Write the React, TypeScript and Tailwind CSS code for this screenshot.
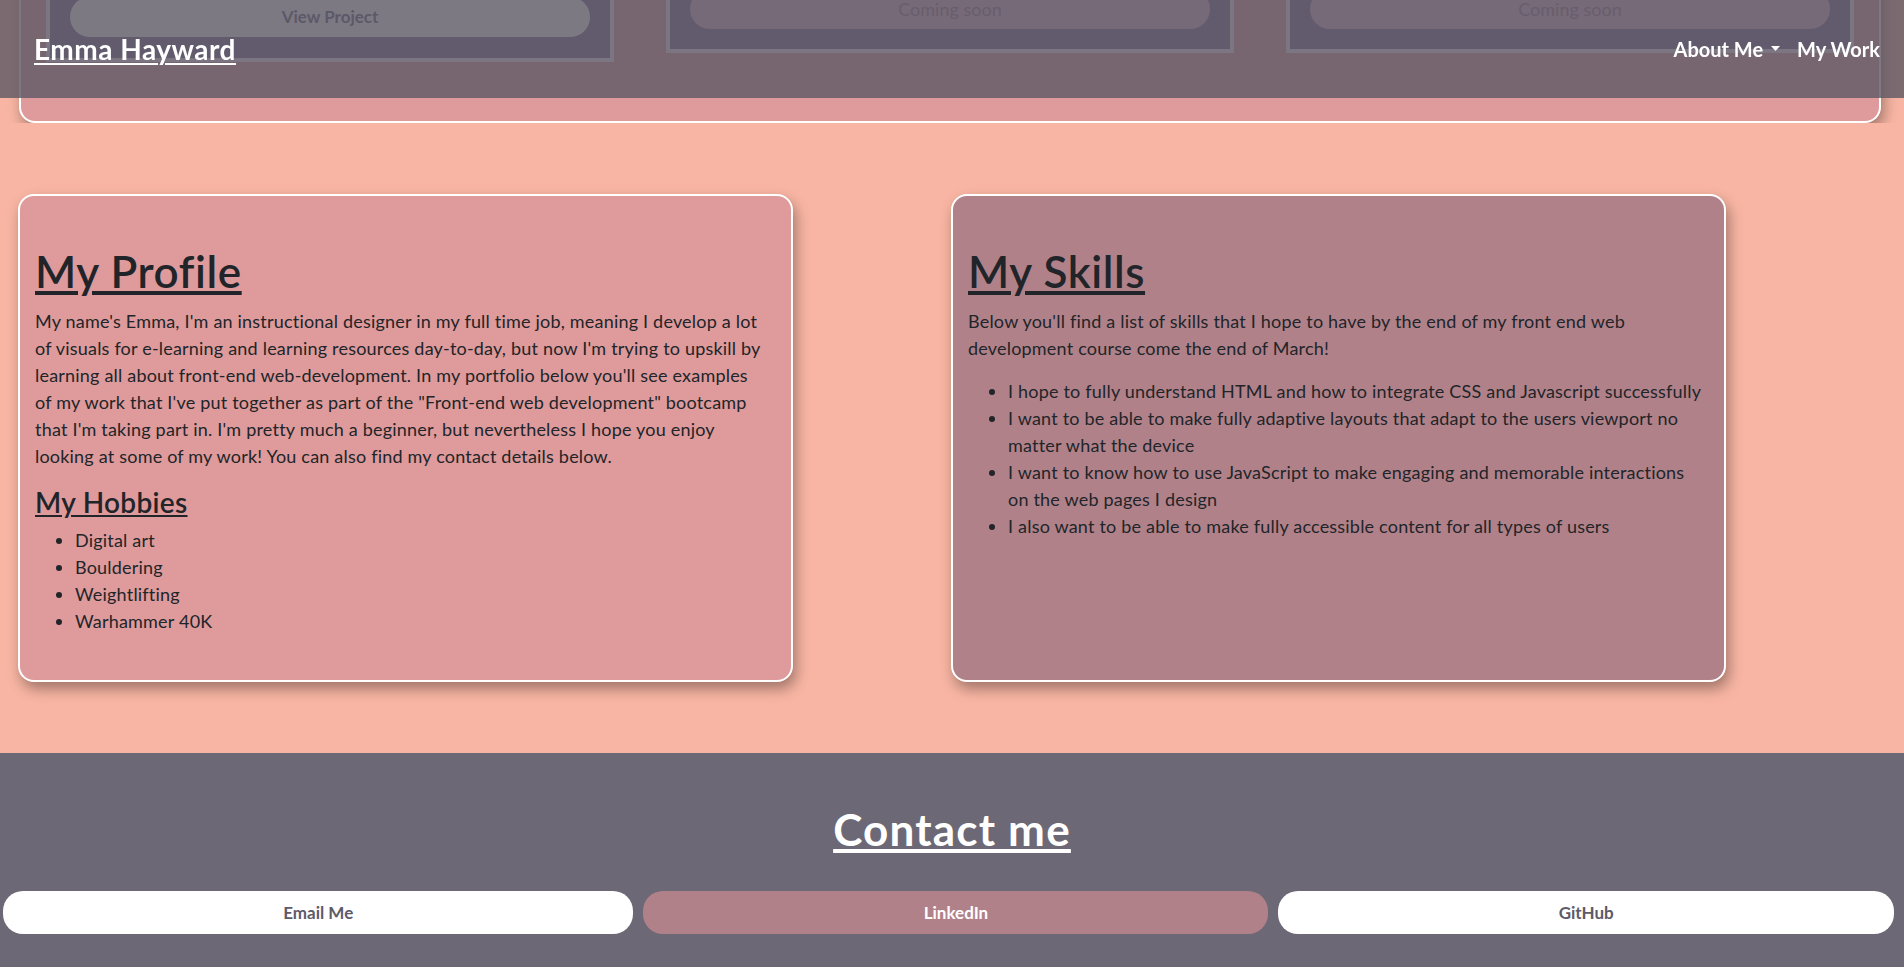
import { ReactNode } from "react";

const hobbies = ["Digital art", "Bouldering", "Weightlifting", "Warhammer 40K"]

const skills = [
    "I hope to fully understand HTML and how to integrate CSS and Javascript successfully",
    "I want to be able to make fully adaptive layouts that adapt to the users viewport no matter what the device",
    "I want to know how to use JavaScript to make engaging and memorable interactions on the web pages I design",
    "I also want to be able to make fully accessible content for all types of users",
]

function Caret() {
    return (
        <svg width="9" height="5" viewBox="0 0 9 5" className="mb-[2px]">
            <polygon points="0,0 9,0 4.5,5" fill="white" />
        </svg>
    )
}

function Navbar() {
    return (
        <nav className="fixed inset-x-0 top-0 z-10 flex h-[98px] items-center justify-between bg-[rgba(92,88,100,0.8)] pl-[34px] pr-[24px]">
            <a href="#" className="text-[28px] font-bold tracking-[0.5px] text-white underline decoration-2 underline-offset-[3px]">Emma Hayward</a>
            <div className="flex items-center text-[20px] font-bold text-white">
                <a href="#" className="flex items-center gap-[8px]">About Me <Caret /></a>
                <a href="#" className="ml-[17px]">My Work</a>
            </div>
        </nav>
    )
}

function ProjectCard({ label, soon, extra }: { label: string, soon?: boolean, extra?: boolean }) {
    return (
        <div className={`border-4 border-[#f5eefa] bg-[#7a6791] px-5 ${extra ? 'pt-[28px] pb-[21px]' : 'pt-5 pb-5'}`}>
            <div className="h-[180px]" />
            {soon ? (
                <div className="flex h-[40px] items-center justify-center rounded-full bg-[#ddb2c6] text-[18px] text-[#93768f]">{label}</div>
            ) : (
                <div className="flex h-[40px] items-center justify-center rounded-full bg-white text-[17px] font-bold text-[#625a78]">{label}</div>
            )}
        </div>
    )
}

function Card({ bg, children }: { bg: string, children: ReactNode }) {
    return (
        <div className={`h-[488px] w-[775px] rounded-[16px] border-2 border-white px-[15px] pt-[49px] shadow-[3px_7px_14px_rgba(0,0,0,0.35)] ${bg}`}>
            {children}
        </div>
    )
}

export default function App(): ReactNode {
    return (
        <div className="relative h-[967px] overflow-hidden bg-[#f8b5a3] font-['Lato',sans-serif] text-[#212529]">
            <Navbar />

            {/* projects section, scrolled past */}
            <div className="flex h-[123px] flex-col justify-end overflow-hidden pl-[19px] pr-[23px]">
                <div className="rounded-b-[16px] border-2 border-t-0 border-white bg-[#df9a9b] px-[25px] pb-[59px] shadow-[3px_7px_14px_rgba(0,0,0,0.35)]">
                    <div className="grid grid-cols-3 items-start gap-[52px]">
                        <ProjectCard label="View Project" extra />
                        <ProjectCard label="Coming soon" soon />
                        <ProjectCard label="Coming soon" soon />
                    </div>
                </div>
            </div>

            <section className="flex gap-[158px] pl-[18px] pt-[71px] pb-[71px] text-[18px] leading-[27px] tracking-[0.2px]">
                <Card bg="bg-[#df9a9b]">
                    <h1 className="mb-[10px] text-[44px] font-semibold leading-[1.2] tracking-[0.6px] underline">My Profile</h1>
                    <p className="mb-[16px] max-w-[730px]">
                        My name's Emma, I'm an instructional designer in my full time job, meaning I develop a lot of visuals for e-learning and learning resources day-to-day, but now I'm trying to upskill by learning all about front-end web-development. In my portfolio below you'll see examples of my work that I've put together as part of the "Front-end web development" bootcamp that I'm taking part in. I'm pretty much a beginner, but nevertheless I hope you enjoy looking at some of my work! You can also find my contact details below.
                    </p>
                    <h3 className="mb-[8px] text-[28px] font-semibold leading-[1.2] tracking-[0.3px] underline">My Hobbies</h3>
                    <ul className="list-disc pl-10">
                        {hobbies.map(h => <li key={h}>{h}</li>)}
                    </ul>
                </Card>
                <Card bg="bg-[#b18189]">
                    <h1 className="mb-[10px] text-[44px] font-semibold leading-[1.2] tracking-[0.6px] underline">My Skills</h1>
                    <p className="mb-[16px]">
                        Below you'll find a list of skills that I hope to have by the end of my front end web development course come the end of March!
                    </p>
                    <ul className="list-disc pl-10">
                        {skills.map(s => <li key={s}>{s}</li>)}
                    </ul>
                </Card>
            </section>

            <footer className="h-[214px] bg-[#6c6875] pt-[50px]">
                <h1 className="text-center text-[44px] font-bold leading-[1.2] tracking-[1.2px] text-white underline">Contact me</h1>
                <div className="mt-[35px] flex gap-[10px] pl-[3px] pr-[10px] text-[17px] font-bold">
                    <a href="#" className="flex h-[43px] flex-auto items-center justify-center rounded-[20px] bg-white text-[#5e5a68]">Email Me</a>
                    <a href="#" className="flex h-[43px] flex-auto items-center justify-center rounded-[20px] bg-[#b18189] text-white">LinkedIn</a>
                    <a href="#" className="flex h-[43px] flex-auto items-center justify-center rounded-[20px] bg-white text-[#5e5a68]">GitHub</a>
                </div>
            </footer>
        </div>
    );
}
